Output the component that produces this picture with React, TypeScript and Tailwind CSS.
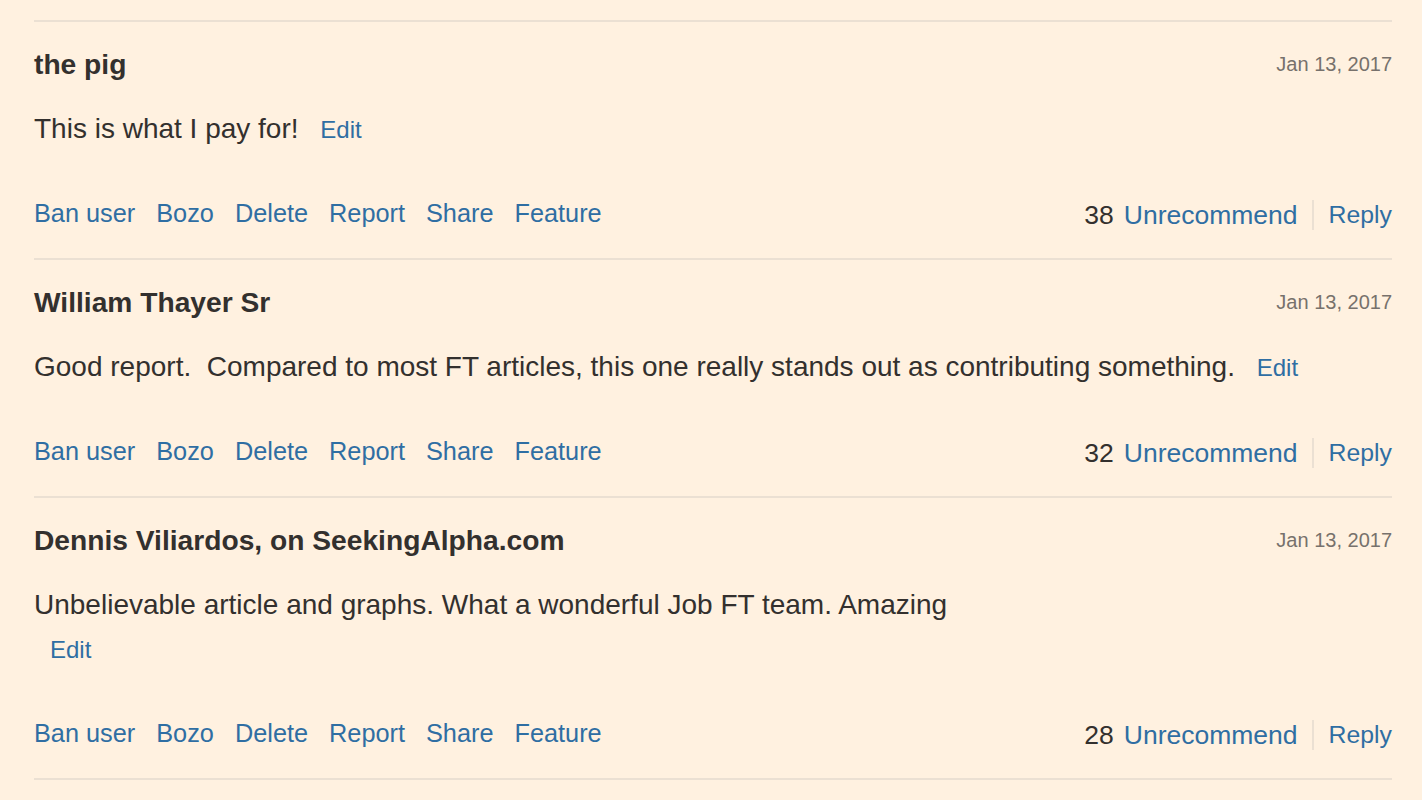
import React from "react";

type C = { name: string; body: string; count: number; wrapEdit?: boolean };

const comments: C[] = [
  { name: "the pig", body: "This is what I pay for!", count: 38 },
  {
    name: "William Thayer Sr",
    body: "Good report.  Compared to most FT articles, this one really stands out as contributing something.",
    count: 32,
  },
  {
    name: "Dennis Viliardos, on SeekingAlpha.com",
    body: "Unbelievable article and graphs. What a wonderful Job FT team. Amazing",
    count: 28,
    wrapEdit: true,
  },
];

const font = { fontFamily: '"Liberation Sans", Arial, sans-serif' };

function Comment({ c }: { c: C }) {
  return (
    <div className="border-t-2 border-[#ebe0d3] pt-[26px] pb-[25px]">
      <div className="flex items-center justify-between h-[32px]">
        <div className="text-[28.2px] leading-[32px] font-bold text-[#33302e]">{c.name}</div>
        <div className="text-[20px] leading-[32px] text-[#77716c]">Jan 13, 2017</div>
      </div>
      <div className="mt-[27px] text-[28px] leading-[44px] text-[#33302e] whitespace-pre-wrap">
        {c.body}
        {c.wrapEdit ? (
          <>
            <br />
            <span className="ml-4 text-[24px] leading-[44px] text-[#2f6ea3]">Edit</span>
          </>
        ) : (
          <>
            {" "}
            <span className="ml-[14px] text-[24px] leading-[44px] text-[#2f6ea3]">Edit</span>
          </>
        )}
      </div>
      <div className="mt-[41px] flex items-center justify-between h-[40px]">
        <div className="flex items-center gap-[21px] text-[25.3px] leading-[40px] text-[#2f6ea3]">
          <span>Ban user</span>
          <span>Bozo</span>
          <span>Delete</span>
          <span>Report</span>
          <span>Share</span>
          <span>Feature</span>
        </div>
        <div className="flex items-center text-[26.5px] leading-[40px] pt-[4px]">
          <span className="text-[#33302e]">{c.count}</span>
          <span className="ml-[10px] text-[#2f6ea3]">Unrecommend</span>
          <span className="ml-[14px] mr-[15px] w-[2px] h-[30px] bg-[#ebe0d3]" />
          <span className="text-[24.8px] text-[#2f6ea3]">Reply</span>
        </div>
      </div>
    </div>
  );
}

export default function App() {
  return (
    <div className="min-h-screen w-full bg-[#fff1e0] pt-[20px]" style={font}>
      <div className="ml-[34px] mr-[30px]">
        {comments.map((c) => (
          <Comment key={c.name} c={c} />
        ))}
        <div className="border-t-2 border-[#ebe0d3]" />
      </div>
    </div>
  );
}
